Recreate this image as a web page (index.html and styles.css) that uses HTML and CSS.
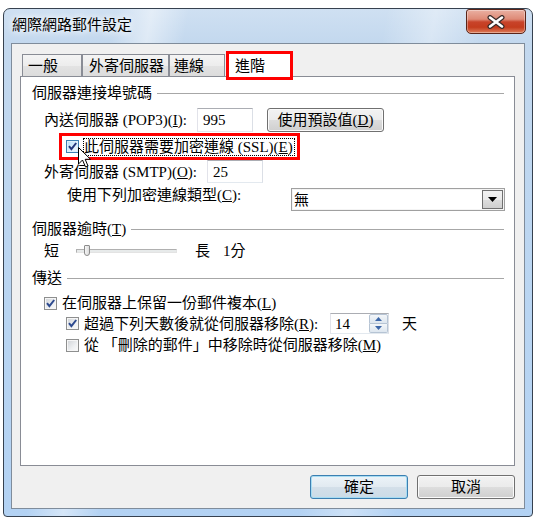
FILE: index.html
```html
<!DOCTYPE html>
<html lang="zh-Hant">
<head>
<meta charset="utf-8">
<title>網際網路郵件設定</title>
<link rel="stylesheet" href="styles.css">
</head>
<body>
<div class="window">
  <div class="titlebar">
    <span class="title">網際網路郵件設定</span>
    <div class="close">
      <svg width="22" height="14" viewBox="0 0 22 14"><path d="M5 2.5 L17 11.5 M17 2.5 L5 11.5" stroke="#3a2a28" stroke-width="5" stroke-linecap="round"/><path d="M5 2.5 L17 11.5 M17 2.5 L5 11.5" stroke="#fff" stroke-width="2.6" stroke-linecap="round"/></svg>
    </div>
  </div>
  <div class="client">
    <div class="tabs">
      <div class="tab t1">一般</div>
      <div class="tab t2">外寄伺服器</div>
      <div class="tab t3">連線</div>
      <div class="tab sel">進階</div>
    </div>
    <div class="panel">
      <div class="group g1"><span>伺服器連接埠號碼</span><i class="rule"></i></div>
      <div class="row pop">
        <span class="lbl w-pop">內送伺服器 (POP3)(<u>I</u>):</span>
        <div class="field w56 h24">995</div>
        <div class="btn defaults">使用預設值(<u>D</u>)</div>
      </div>
      <div class="ssl">
        <span class="cb hover"><svg width="11" height="11" viewBox="0 0 11 11"><path d="M2 5.2 L4.4 8.2 L9.2 2" fill="none" stroke="#22367a" stroke-width="2"/></svg></span>
        <span class="focus">此伺服器需要加密連線 (SSL)(<u>E</u>)</span>
      </div>
      <div class="row smtp">
        <span class="lbl w-smtp">外寄伺服器 (SMTP)(<u>O</u>):</span>
        <div class="field w56 h23">25</div>
      </div>
      <div class="row enc">
        <span class="lbl w-enc">使用下列加密連線類型(<u>C</u>):</span>
        <div class="combo">
          <span>無</span>
          <div class="drop"><svg width="9" height="5" viewBox="0 0 9 5"><path d="M0 0 H9 L4.5 5 Z" fill="#000"/></svg></div>
        </div>
      </div>
      <div class="group g2"><span>伺服器逾時(<u>T</u>)</span><i class="rule"></i></div>
      <div class="row slider">
        <span>短</span>
        <div class="track"><i class="thumb"></i></div>
        <span class="long">長</span>
        <span class="value">1分</span>
      </div>
      <div class="group g3"><span>傳送</span><i class="rule"></i></div>
      <div class="row keep">
        <span class="cb"><svg width="11" height="11" viewBox="0 0 11 11"><path d="M2 5.2 L4.4 8.2 L9.2 2" fill="none" stroke="#2d4a8f" stroke-width="2"/></svg></span>
        <span class="cbtext">在伺服器上保留一份郵件複本(<u>L</u>)</span>
      </div>
      <div class="row days">
        <span class="cb"><svg width="11" height="11" viewBox="0 0 11 11"><path d="M2 5.2 L4.4 8.2 L9.2 2" fill="none" stroke="#2d4a8f" stroke-width="2"/></svg></span>
        <span class="cbtext w-days">超過下列天數後就從伺服器移除(<u>R</u>):</span>
        <div class="spin">
          <span>14</span>
          <div class="arrows">
            <i class="up"><svg width="7" height="4" viewBox="0 0 7 4"><path d="M0 4 H7 L3.5 0 Z" fill="#3d67a8"/></svg></i>
            <i class="down"><svg width="7" height="4" viewBox="0 0 7 4"><path d="M0 0 H7 L3.5 4 Z" fill="#3d67a8"/></svg></i>
          </div>
        </div>
        <span class="unit">天</span>
      </div>
      <div class="row deleted">
        <span class="cb"></span>
        <span class="cbtext">從 「刪除的郵件」中移除時從伺服器移除(<u>M</u>)</span>
      </div>
      <svg class="cursor" width="14" height="22" viewBox="0 0 14 22"><path d="M0.5 0.5 V17 L4.5 13 L7.5 20 L10 19 L7.2 12.3 H12.5 Z" fill="#fff" stroke="#000" stroke-width="1"/></svg>
    </div>
    <div class="actions">
      <div class="btn default">確定</div>
      <div class="btn">取消</div>
    </div>
  </div>
</div>
</body>
</html>
```

FILE: styles.css
```css
* { box-sizing: border-box; }
body {
  margin: 0;
  background: #fff;
  font-family: "Liberation Serif", "Noto Sans CJK TC", serif;
  font-size: 15px;
  line-height: 18px;
  color: #000;
}
u { text-decoration: underline; text-underline-offset: 1px; }

.window {
  position: relative;
  width: 530px;
  height: 509px;
  margin: 8px 0 0 3px;
  border: 1px solid #36414f;
  border-radius: 7px 7px 4px 4px;
  padding: 0 7px 7px;
  display: flex;
  flex-direction: column;
  background:
    linear-gradient(100deg, rgba(255,255,255,0) 18%, rgba(255,255,255,.45) 24%, rgba(255,255,255,0) 30%, rgba(255,255,255,0) 62%, rgba(255,255,255,.35) 70%, rgba(255,255,255,0) 78%),
    linear-gradient(180deg, #cfe0f2 0, #c3d8ee 34px, #b9d5f2 60%, #b3d2f3 100%);
}
.titlebar {
  height: 34px;
  margin: 0 -7px;
  padding: 7px 0 0 8px;
}
.title {
  text-shadow: 0 0 6px #fff, 0 0 10px rgba(255,255,255,.9);
}
.close {
  position: absolute;
  top: 0;
  right: 6px;
  width: 60px;
  height: 25px;
  border: 1px solid #5a2418;
  border-radius: 3px 3px 5px 5px;
  background: linear-gradient(180deg, #eab0a2 0, #de8a76 40%, #c8432a 52%, #c43c1e 75%, #dd7d5a 100%);
  box-shadow: inset 0 0 0 1px rgba(255,255,255,.35);
  display: flex;
  align-items: center;
  justify-content: center;
}

.client {
  flex: 1;
  border: 1px solid #7f8c9b;
  background: #f0f0f0;
  padding: 10px 9px 9px 8px;
  display: flex;
  flex-direction: column;
}

.tabs {
  display: flex;
  align-items: flex-end;
  height: 22px;
  padding-left: 2px;
}
.tab {
  height: 22px;
  border: 1px solid #898c95;
  border-bottom: none;
  background: linear-gradient(180deg, #f4f4f4 0, #ededed 50%, #e3e3e3 51%, #dcdcdc 100%);
  padding: 2px 0 0 5px;
  white-space: nowrap;
}
.t1 { width: 60px; }
.t2 { width: 87px; padding-left: 6px; }
.t3 { width: 56px; padding-left: 4px; }
.tab.sel {
  position: relative;
  z-index: 1;
  width: 67px;
  height: 29px;
  margin: 0 0 -4px 1px;
  border: 3px solid #ff0000;
  background: #fff;
  padding: 3px 0 0 6px;
}

.panel {
  position: relative;
  flex: none;
  height: 390px;
  border: 1px solid #898c95;
  background: #fff;
  padding: 0 10px 0 11px;
}

.group {
  display: flex;
  align-items: center;
  height: 18px;
  white-space: nowrap;
}
.group .rule {
  flex: 1;
  height: 1px;
  margin-left: 5px;
  background: #a7a7a7;
}
.g1 { margin-top: 7px; }
.g2 { margin-top: 9px; }
.g3 { margin-top: 9px; }

.row {
  display: flex;
  align-items: center;
  white-space: nowrap;
}
.lbl { flex: none; }
.pop { margin-top: 6px; height: 24px; padding-left: 12px; }
.w-pop { width: 153px; }
.smtp { height: 23px; padding-left: 12px; }
.w-smtp { width: 163px; }
.enc { margin-top: 3px; height: 25px; align-items: flex-start; padding-left: 35px; }
.w-enc { width: 224px; }

.field {
  flex: none;
  border: 1px solid #abadb3;
  border-color: #abadb3 #dbdfe6 #e3e9ef #e2e3ea;
  background: #fff;
  padding-left: 5px;
  display: flex;
  align-items: center;
}
.w56 { width: 56px; }
.h24 { height: 24px; }
.h23 { height: 23px; }

.btn {
  flex: none;
  height: 24px;
  border: 1px solid #707070;
  border-radius: 3px;
  background: linear-gradient(180deg, #f2f2f2 0, #ebebeb 50%, #dddddd 51%, #cfcfcf 100%);
  box-shadow: inset 0 0 0 1px #fbfbfb;
  display: flex;
  align-items: center;
  justify-content: center;
  white-space: nowrap;
}
.defaults { width: 117px; margin-left: 14px; }
.btn.default {
  border-color: #3c7fb1;
  background: linear-gradient(180deg, #ecf3f8 0, #e1eaf1 50%, #d3dfe9 51%, #cbdbe7 100%);
  box-shadow: inset 0 0 0 1px #a6dcf3;
}

.ssl {
  margin: 1px 0 0 27px;
  width: 241px;
  height: 27px;
  border: 3px solid #ff0000;
  display: flex;
  align-items: center;
  padding-left: 4px;
  white-space: nowrap;
}
.focus {
  margin-left: 4px;
  border: 1px dotted #000;
  line-height: 16px;
  padding-right: 1px;
}

.cb {
  flex: none;
  width: 13px;
  height: 13px;
  border: 1px solid #8e8f8f;
  background: linear-gradient(135deg, #cfd2d6 0, #eef0f2 60%, #fbfbfb 100%);
  box-shadow: inset 0 0 0 1px #f6f6f6;
  display: flex;
  align-items: center;
  justify-content: center;
}
.cb.hover {
  border-color: #3c7fb1;
  background: linear-gradient(135deg, #b6defa 0, #def1fd 60%, #f1f9fe 100%);
  box-shadow: inset 0 0 0 1px #deeffb;
}
.cbtext { margin-left: 5px; flex: none; }

.combo {
  flex: none;
  width: 214px;
  height: 23px;
  margin: 2px -1px 0 0;
  border: 1px solid #a0a0a0;
  box-shadow: inset 0 0 0 1px #f4f4f4;
  background: #fff;
  display: flex;
  align-items: center;
  padding-left: 2px;
}
.drop {
  margin-left: auto;
  margin-right: 1px;
  width: 21px;
  height: 19px;
  border: 1px solid #707070;
  background: linear-gradient(180deg, #f2f2f2 0, #ebebeb 50%, #dddddd 51%, #cfcfcf 100%);
  display: flex;
  align-items: center;
  justify-content: center;
}

.slider { margin-top: 4px; height: 18px; padding-left: 12px; }
.track {
  position: relative;
  flex: none;
  width: 101px;
  height: 4px;
  margin-left: 17px;
  border: 1px solid #b9b9b9;
  border-color: #b0b0b0 #e3e3e3 #e3e3e3 #b0b0b0;
  background: #e7eaea;
}
.thumb {
  position: absolute;
  left: 7px;
  top: -5px;
  width: 6px;
  height: 11px;
  border: 1px solid #8c8c8c;
  border-radius: 1px 1px 3px 3px;
  background: linear-gradient(90deg, #f6f6f6, #dcdcdc);
}
.long { margin-left: 18px; }
.value { margin-left: 13px; }

.keep { margin-top: 7px; height: 18px; padding-left: 12px; }
.days { margin-top: 1px; height: 21px; padding-left: 34px; }
.deleted { margin-top: 2px; height: 18px; padding-left: 34px; }
.w-days { width: 246px; }

.spin {
  flex: none;
  width: 59px;
  height: 21px;
  border: 1px solid #abadb3;
  border-color: #abadb3 #dbdfe6 #e3e9ef #e2e3ea;
  background: #fff;
  display: flex;
  align-items: center;
  padding-left: 4px;
}
.arrows {
  margin-left: auto;
  width: 19px;
  height: 19px;
  display: flex;
  flex-direction: column;
}
.arrows i {
  flex: 1;
  border: 1px solid #b6c4d4;
  background: linear-gradient(180deg, #f3f6f9, #dde6ef);
  display: flex;
  align-items: center;
  justify-content: center;
}
.arrows .up { border-radius: 2px 2px 0 0; }
.arrows .down { border-top: none; border-radius: 0 0 2px 2px; }
.unit { margin-left: 13px; }

.cursor {
  position: absolute;
  left: 57px;
  top: 70px;
}

.actions {
  display: flex;
  justify-content: flex-end;
  gap: 9px;
  margin-top: 9px;
}
.actions .btn { width: 98px; }
```
